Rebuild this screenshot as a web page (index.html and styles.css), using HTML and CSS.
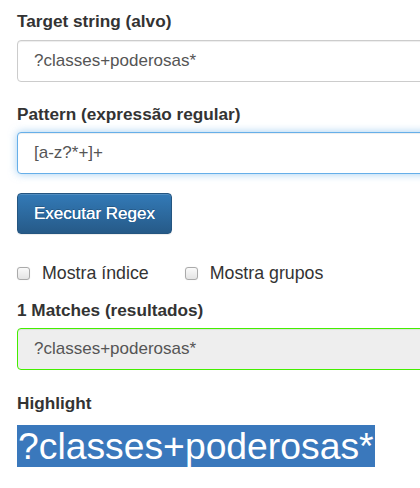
FILE: index.html
```html
<!DOCTYPE html>
<html lang="pt">
<head>
<meta charset="utf-8">
<title>Regex</title>
<link rel="stylesheet" href="styles.css">
</head>
<body>
<main class="page">
  <label class="lbl lbl-first" for="target">Target string (alvo)</label>
  <input id="target" class="field" type="text" value="?classes+poderosas*">

  <label class="lbl lbl-next" for="pattern">Pattern (expressão regular)</label>
  <input id="pattern" class="field field-focus" type="text" value="[a-z?*+]+">

  <button class="btn" type="button">Executar Regex</button>

  <div class="checks">
    <label class="check"><input type="checkbox" class="box"> Mostra índice</label>
    <label class="check"><input type="checkbox" class="box"> Mostra grupos</label>
  </div>

  <div class="lbl lbl-matches">1 Matches (resultados)</div>
  <div class="result">?classes+poderosas*</div>

  <div class="lbl lbl-highlight">Highlight</div>
  <div class="highlight"><span class="mark">?classes+poderosas*</span></div>
</main>
</body>
</html>
```
FILE: styles.css
```css
html, body {
  margin: 0;
  padding: 0;
  background: #fff;
}
body {
  font-family: "Liberation Sans", Arial, sans-serif;
  color: #333;
  overflow: hidden;
}
.page {
  display: flex;
  flex-direction: column;
  align-items: flex-start;
  padding: 10px 0 0 17px;
}
.lbl {
  display: block;
  font-size: 17.2px;
  font-weight: bold;
  line-height: 23px;
  height: 23px;
  color: #333;
}
.lbl-first { margin-bottom: 7px; }
.lbl-next { margin-top: 21px; margin-bottom: 6px; }
.field {
  box-sizing: border-box;
  width: 520px;
  height: 42px;
  margin: 0;
  padding: 0 16px;
  font-family: "Liberation Sans", Arial, sans-serif;
  font-size: 17px;
  color: #555;
  background: #fff;
  border: 1px solid #ccc;
  border-radius: 4px;
  box-shadow: inset 0 1px 1px rgba(0,0,0,.075);
  outline: none;
}
.field-focus {
  border-color: #66afe9;
  box-shadow: inset 0 1px 1px rgba(0,0,0,.075), 0 0 8px rgba(102,175,233,.6);
}
.btn {
  box-sizing: border-box;
  margin-top: 19px;
  height: 41px;
  width: 155px;
  padding: 0;
  font-family: "Liberation Sans", Arial, sans-serif;
  font-size: 17px;
  color: #fff;
  border: 1px solid #245580;
  border-radius: 4px;
  background: linear-gradient(to bottom, #337ab7 0%, #265a88 100%);
  box-shadow: inset 0 1px 0 rgba(255,255,255,.15), 0 1px 1px rgba(0,0,0,.075);
  text-shadow: 0 0 0.4px #fff, 0 -1px 0 rgba(0,0,0,.2);
}
.checks {
  display: flex;
  gap: 36px;
  margin-top: 28px;
  height: 22px;
  align-items: center;
}
.check {
  display: flex;
  align-items: center;
  gap: 12px;
  font-size: 17.8px;
  line-height: 22px;
  color: #333;
}
.box {
  -webkit-appearance: none;
  appearance: none;
  box-sizing: border-box;
  width: 13px;
  height: 13px;
  margin: 0;
  border: 1px solid #aaa;
  border-radius: 3px;
  background: linear-gradient(to bottom, #fafafa, #e4e4e4);
  box-shadow: 0 0 1px rgba(0,0,0,.15);
}
.lbl-matches { margin-top: 15px; margin-bottom: 6px; }
.result {
  box-sizing: border-box;
  width: 520px;
  height: 42px;
  line-height: 40px;
  padding: 0 16px;
  font-size: 17px;
  color: #555;
  background: #eee;
  border: 1px solid #44ee00;
  border-radius: 4px;
  box-shadow: inset 0 1px 1px rgba(0,0,0,.075);
}
.lbl-highlight { margin-top: 22px; margin-bottom: 10px; }
.highlight {
  font-size: 37.3px;
  line-height: 42px;
}
.mark {
  display: inline-block;
  height: 42px;
  line-height: 43px;
  color: #fff;
  background: #3a78bc;
  padding: 0 1px;
}
```
